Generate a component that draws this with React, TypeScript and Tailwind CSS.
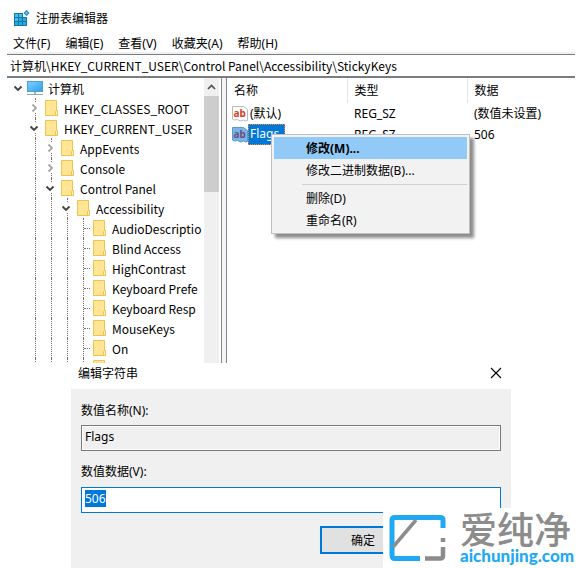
// registry editor window with the "edit string" dialog below it

import React, { useEffect, useRef } from "react";

const menus = ["文件(F)", "编辑(E)", "查看(V)", "收藏夹(A)", "帮助(H)"];

type Node = { name: string; level: number; state: "open" | "closed" | "leaf" };

const nodes: Node[] = [
  { name: "计算机", level: 0, state: "open" },
  { name: "HKEY_CLASSES_ROOT", level: 1, state: "closed" },
  { name: "HKEY_CURRENT_USER", level: 1, state: "open" },
  { name: "AppEvents", level: 2, state: "closed" },
  { name: "Console", level: 2, state: "closed" },
  { name: "Control Panel", level: 2, state: "open" },
  { name: "Accessibility", level: 3, state: "open" },
  { name: "AudioDescriptio", level: 4, state: "leaf" },
  { name: "Blind Access", level: 4, state: "leaf" },
  { name: "HighContrast", level: 4, state: "leaf" },
  { name: "Keyboard Prefe", level: 4, state: "leaf" },
  { name: "Keyboard Resp", level: 4, state: "leaf" },
  { name: "MouseKeys", level: 4, state: "leaf" },
  { name: "On", level: 4, state: "leaf" },
  { name: "", level: 4, state: "leaf" },
];

function RegistryIcon() {
  return (
    <svg width="16" height="16" viewBox="0 0 16 16">
      <path d="M0 3h9v4h4v9H0z" fill="#1279a8" />
      <g fill="#45c0ec">
        <path d="M1 4h3v3H1zM5 4h3v3H5zM1 8h3v3H1z" />
      </g>
      <path d="M5 8h3v3H5zM9 8h3v3H9zM1 12h3v3H1zM5 12h3v3H5zM9 12h3v3H9z" fill="#27a9de" />
      <path d="M12.5 0L15.5 3L12.5 6L9.5 3z" fill="#1489bd" />
      <path d="M12.5 1.5L14 3L12.5 4.5L11 3z" fill="#6fd0f2" />
    </svg>
  );
}

function ComputerIcon() {
  return (
    <svg className="shrink-0" width="18" height="16" viewBox="0 0 18 16">
      <defs>
        <linearGradient id="screen" x1="0" y1="0" x2="1" y2="1">
          <stop offset="0" stopColor="#7fd0fb" />
          <stop offset="1" stopColor="#2f9fe8" />
        </linearGradient>
      </defs>
      <rect x="1.5" y="1.5" width="15" height="10" fill="url(#screen)" stroke="#4aa3d8" />
      <path d="M8 12h2v2H8z" fill="#9db4c4" />
      <path d="M1 14h16v1H1z" fill="#8ea6b6" />
    </svg>
  );
}

function FolderIcon() {
  return (
    <svg className="shrink-0" width="18" height="16" viewBox="0 0 18 16">
      <path d="M3.5.5h11v10h1v5h-12z" fill="#ffe594" stroke="#ecc452" />
      <path d="M13.5 15.5v-4l1-1h1v5z" fill="#fff0b8" stroke="#ecc452" />
    </svg>
  );
}

function StringIcon({ selected }: { selected?: boolean }) {
  return (
    <svg className="shrink-0" width="16" height="16" viewBox="0 0 16 16">
      <path
        d="M.5.5h11l4 3v11l-2 .5-2-1-3 1-3-1.5-3 .5-2-1z"
        fill={selected ? "#79b5e8" : "#fff"}
        stroke={selected ? "#5b9ad0" : "#b9b9b9"}
      />
      <text
        x="1.5"
        y="11"
        fontSize="10"
        fontWeight="bold"
        fontFamily="Noto Sans, sans-serif"
        fill={selected ? "#6d4f80" : "#d3401f"}>
        ab
      </text>
    </svg>
  );
}

function Chevron({ open }: { open: boolean }) {
  return (
    <svg className="relative bg-white" width="10" height="10" viewBox="0 0 10 10">
      {open ? (
        <path d="M1.5 3.5L5 7l3.5-3.5" fill="none" stroke="#404040" strokeWidth="1.8" />
      ) : (
        <path d="M3.5 1.5L7 5 3.5 8.5" fill="none" stroke="#a6a6a6" strokeWidth="1.8" />
      )}
    </svg>
  );
}

function Guide() {
  return <span className="ml-[9px] h-full w-[7px] shrink-0 border-l border-dotted border-[#707070]" />;
}

function TreeRow({ node }: { node: Node }) {
  return (
    <li role="treeitem" className="flex h-5 items-center pl-[3px] whitespace-nowrap">
      {/* the root row has no column of its own for a guide */}
      {node.level > 0 && <span className="w-4 shrink-0" />}
      {Array.from({ length: Math.max(0, node.level - 1) }, (_, i) => (
        <Guide key={i} />
      ))}
      {node.state === "leaf" ? (
        <span className="ml-[9px] flex h-full w-[7px] shrink-0 items-center border-l border-dotted border-[#707070]">
          <span className="w-full border-t border-dotted border-[#707070]" />
        </span>
      ) : (
        <span className="relative flex h-full w-4 shrink-0 items-center justify-center">
          {node.level > 0 && (
            <span className="absolute inset-y-0 left-[9px] border-l border-dotted border-[#707070]" />
          )}
          <Chevron open={node.state === "open"} />
        </span>
      )}
      {node.level === 0 ? <ComputerIcon /> : <FolderIcon />}
      <span className="pl-1">{node.name}</span>
    </li>
  );
}

function Tree() {
  return (
    <div className="flex w-[215px] shrink-0 border-r border-[#828790]">
      <ul
        role="tree"
        className="min-w-0 flex-1 overflow-hidden font-['Noto_Sans_CJK_SC',sans-serif]">
        {nodes.map((node) => (
          <TreeRow key={node.name} node={node} />
        ))}
      </ul>
      <div className="mr-0.5 w-[15px] bg-[#f0f0f0]">
        <div className="flex h-[18px] items-center justify-center">
          <svg width="9" height="6" viewBox="0 0 9 6">
            <path d="M1 5l3.5-3.5L8 5" fill="none" stroke="#505050" strokeWidth="1.7" />
          </svg>
        </div>
        <div className="h-24 bg-[#cdcdcd]" />
      </div>
    </div>
  );
}

function ContextMenu() {
  return (
    <div className="absolute top-14 left-11 w-[199px] border border-[#c0c0c0] bg-[#f2f2f2] p-0.5 shadow-[4px_4px_3px_rgba(0,0,0,0.45)]">
      <button className="block h-[22px] w-full bg-[#91c9f7] pl-8 text-left font-bold">修改(M)...</button>
      <button className="block h-[22px] w-full pl-8 text-left">修改二进制数据(B)...</button>
      <div className="mt-[3px] mb-0.5 ml-7 border-t border-[#d0d0d0]" />
      <button className="block h-[22px] w-full pl-8 text-left">删除(D)</button>
      <button className="block h-[22px] w-full pl-8 text-left">重命名(R)</button>
    </div>
  );
}

function Values() {
  return (
    <div className="relative min-w-0 flex-1 border-l border-[#828790]">
      <table className="w-full table-fixed border-collapse text-left">
        <thead>
          <tr className="h-[25px]">
            <th className="w-[120px] border-r border-[#e5e5e5] pl-[7px] font-normal">名称</th>
            <th className="w-[120px] border-r border-[#e5e5e5] pl-[7px] font-normal">类型</th>
            <th className="pl-[7px] font-normal">数据</th>
          </tr>
        </thead>
        <tbody>
          <tr className="h-[21px]">
            <td className="pl-[5px]">
              <span className="flex items-center">
                <StringIcon />
                <span className="px-0.5">(默认)</span>
              </span>
            </td>
            <td className="pl-[7px]">REG_SZ</td>
            <td className="pl-[7px]">(数值未设置)</td>
          </tr>
          <tr className="h-[21px]">
            <td className="pl-[5px]">
              <span className="flex items-center">
                <StringIcon selected />
                <span className="h-[21px] border border-dotted border-[#ff8728] bg-[#0078d7] pr-[5px] pl-px text-white">
                  Flags
                </span>
              </span>
            </td>
            <td className="pl-[7px]">REG_SZ</td>
            <td className="pl-[7px]">506</td>
          </tr>
        </tbody>
      </table>
      <ContextMenu />
    </div>
  );
}

function EditDialog() {
  const dataRef = useRef<HTMLInputElement>(null);

  useEffect(() => {
    dataRef.current?.focus();
    dataRef.current?.select();
  }, []);

  return (
    <section className="mr-[72px] ml-[71px]">
      <header className="flex h-[26px] items-center justify-between pr-[9px] pb-1.5 pl-[7px]">
        <h2>编辑字符串</h2>
        <button aria-label="关闭">
          <svg width="12" height="12" viewBox="0 0 12 12">
            <path d="M1 1l10 10M11 1L1 11" stroke="#000" strokeWidth="1.1" />
          </svg>
        </button>
      </header>
      <div className="bg-[#f0f0f0] px-[10px] pt-3 pb-[14px]">
        <label htmlFor="value-name" className="block h-6 leading-5">
          数值名称(N):
        </label>
        <input
          id="value-name"
          readOnly
          defaultValue="Flags"
          className="block h-[26px] w-full border border-[#7a7a7a] pl-[3px] pb-[3px] shadow-[inset_0_0_0_1px_#fff] outline-none"
        />
        <label htmlFor="value-data" className="mt-[11px] block h-[25px] leading-5">
          数值数据(V):
        </label>
        <input
          id="value-data"
          ref={dataRef}
          defaultValue="506"
          className="block h-[26px] w-full border border-[#0078d7] bg-white pl-[3px] pb-[3px] caret-transparent outline-none selection:bg-[#0078d7] selection:text-white"
        />
        <button className="mt-[13px] ml-[239px] block h-[28px] w-[86px] border-2 border-[#0078d7] bg-[#e1e1e1]">
          确定
        </button>
      </div>
    </section>
  );
}

function SiteLogo() {
  return (
    <div className="absolute right-0 bottom-0 flex h-[60px] w-[200px] items-center bg-white pl-1.5">
      <svg className="shrink-0" width="57" height="48" viewBox="0 0 57 48">
        <path
          d="M54 14V6Q54 3.500 51 3.500H6Q3 3.500 3 6V41Q3 44.500 6 44.500H31"
          fill="none"
          stroke="#1fa9f4"
          strokeWidth="5"
        />
        <path d="M27 6L4 33" stroke="#8c8c8c" strokeWidth="3.5" />
        <path d="M54 24v4M54 33v9q0 2.500-3 2.500H36" fill="none" stroke="#8c8c8c" strokeWidth="4.5" />
      </svg>
      <div className="pl-3.5">
        <div className="h-[35px] text-[37px] leading-[33px] font-medium text-[#8c8c8c]">爱纯净</div>
        <div className="font-['Lato',sans-serif] text-[17px] leading-4 font-black text-[#1fa9f4]">
          aichunjing.com
        </div>
      </div>
    </div>
  );
}

export default function App() {
  return (
    <main className="relative bg-white font-['Noto_Sans','Noto_Sans_CJK_SC',sans-serif] text-[12px] leading-[17px] text-black">
      <div className="mr-2 ml-[7px]">
        <header className="flex h-[34px] items-center gap-1.5 pt-0.5 pl-[7px]">
          <RegistryIcon />
          <h1>注册表编辑器</h1>
        </header>
        <nav className="flex h-[18px] items-center gap-[15px] pl-1.5">
          {menus.map((menu) => (
            <button key={menu}>{menu}</button>
          ))}
        </nav>
        <div className="border-t-2 border-[#f0f0f0]">
          <input
            aria-label="地址"
            readOnly
            defaultValue="计算机\HKEY_CURRENT_USER\Control Panel\Accessibility\StickyKeys"
            className="block h-6 w-full border-t border-b-2 border-[#7a7d80] bg-white pl-[3px] font-['Noto_Sans_CJK_SC',sans-serif] outline-none"
          />
        </div>
        <div className="flex h-[285px] gap-1 bg-[#f5f5f7] *:bg-white">
          <Tree />
          <Values />
        </div>
      </div>
      <EditDialog />
      <SiteLogo />
    </main>
  );
}
